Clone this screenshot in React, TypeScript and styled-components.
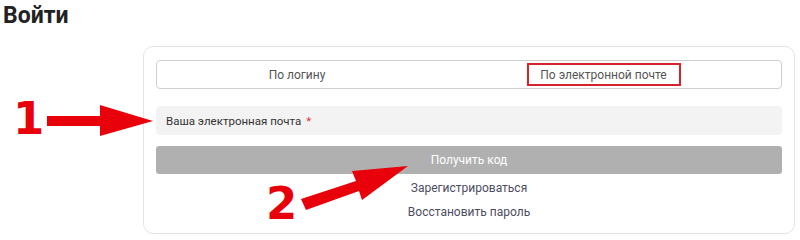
import React from "react";
import styled, { createGlobalStyle } from "styled-components";

const GlobalStyle = createGlobalStyle`
  html, body {
    margin: 0;
    padding: 0;
    background: #fff;
    font-family: Roboto, "Liberation Sans", sans-serif;
  }
`;

const Page = styled.div`
  position: relative;
  width: 800px;
  height: 240px;
  overflow: hidden;
`;

const Title = styled.h1`
  margin: 0;
  padding: 2px 0 0 3px;
  height: 46px;
  box-sizing: border-box;
  font-size: 23px;
  line-height: 27px;
  font-weight: 700;
  color: #222;
`;

const Card = styled.div`
  margin-left: 143px;
  width: 652px;
  box-sizing: border-box;
  padding: 13px 12px 9px 12px;
  border: 1px solid #e4e4e4;
  border-radius: 10px;
`;

const Tabs = styled.div`
  display: flex;
  height: 29px;
  box-sizing: border-box;
  border: 1px solid #cfcfcf;
  border-radius: 4px;
`;

const Tab = styled.div<{ $width?: number; $shift?: number }>`
  display: flex;
  align-items: center;
  justify-content: center;
  flex: ${(p) => (p.$width ? `0 0 ${p.$width}px` : "1")};
  padding-right: ${(p) => p.$shift ?? 0}px;
  font-size: 12px;
  color: #555;
`;

const MarkedLabel = styled.span`
  display: inline-flex;
  align-items: center;
  justify-content: center;
  width: 154px;
  height: 23px;
  box-sizing: border-box;
  border: 2px solid #d4232a;
`;

const Field = styled.div`
  margin-top: 17px;
  height: 29px;
  display: flex;
  align-items: center;
  padding-left: 10px;
  background: #f3f3f3;
  border-radius: 4px;
  font-size: 11.5px;
  color: #333;
`;

const Required = styled.span`
  color: #e0322f;
  margin-left: 5px;
`;

const SubmitButton = styled.button`
  display: block;
  width: 100%;
  margin-top: 11px;
  height: 28px;
  border: none;
  border-radius: 3px;
  background: #b0b0b0;
  color: #fff;
  font-family: Roboto, "Liberation Sans", sans-serif;
  font-size: 12px;
`;

const Links = styled.div`
  margin-top: 2px;
  display: flex;
  flex-direction: column;
  align-items: center;
`;

const LinkText = styled.a`
  font-size: 12px;
  line-height: 24px;
  color: #4b4d63;
  text-decoration: none;
`;

const Marker = styled.span<{ $x: number; $y: number }>`
  position: absolute;
  left: ${(p) => p.$x}px;
  top: ${(p) => p.$y}px;
  font-family: "DejaVu Sans", sans-serif;
  font-weight: 700;
  font-size: 45px;
  line-height: 1;
  color: #e8000b;
`;

const Overlay = styled.svg`
  position: absolute;
  left: 0;
  top: 0;
  pointer-events: none;
`;

export default function App() {
  return (
    <Page>
      <GlobalStyle />
      <Title>Войти</Title>
      <Card>
        <Tabs>
          <Tab $width={280}>По логину</Tab>
          <Tab $shift={11}>
            <MarkedLabel>По электронной почте</MarkedLabel>
          </Tab>
        </Tabs>
        <Field>
          Ваша электронная почта<Required>*</Required>
        </Field>
        <SubmitButton>Получить код</SubmitButton>
        <Links>
          <LinkText href="#">Зарегистрироваться</LinkText>
          <LinkText href="#">Восстановить пароль</LinkText>
        </Links>
      </Card>
      <Marker $x={13} $y={96}>1</Marker>
      <Marker $x={266} $y={181}>2</Marker>
      <Overlay width={800} height={240}>
        <polygon
          points="47,116 100,116 100,105 153,121 100,136 100,126 47,126"
          fill="#e8000b"
        />
        <polygon
          points="301,199 356,181 352,171 408,166 362,200 359,191 306,210"
          fill="#e8000b"
        />
      </Overlay>
    </Page>
  );
}
